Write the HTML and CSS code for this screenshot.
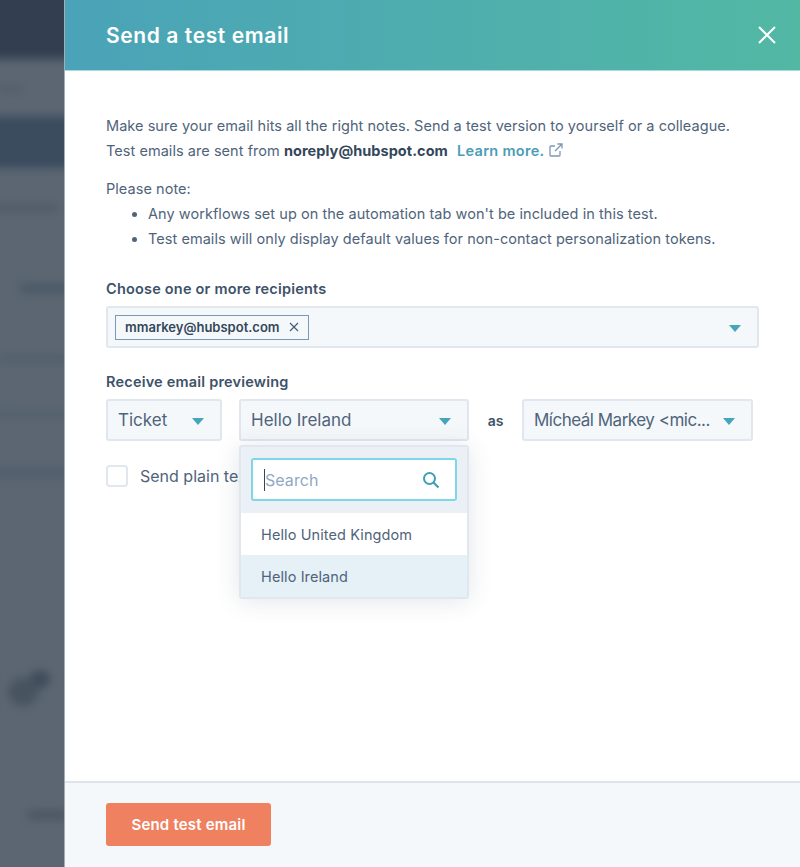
FILE: index.html
```html
<!DOCTYPE html>
<html lang="en">
<head>
<meta charset="utf-8">
<title>Send a test email</title>
<link rel="stylesheet" href="styles.css">
</head>
<body>
<div class="page">
  <div class="backdrop" aria-hidden="true">
    <div class="blur">
      <div class="band b-top"></div>
      <div class="streak s1"></div>
      <div class="band b-dark"></div>
      <div class="streak s2"></div>
      <div class="streak s3"></div>
      <div class="streak s4"></div>
      <div class="streak s5"></div>
      <div class="streak s6"></div>
      <div class="blob"></div>
      <div class="streak s7"></div>
    </div>
  </div>
  <main class="modal">
    <header class="modal-head">
      <h1>Send a test email</h1>
      <svg class="close" viewBox="0 0 18 18" width="18" height="18"><path d="M1 1l16 16M17 1L1 17" stroke="#fff" stroke-width="2" fill="none"/></svg>
    </header>
    <section class="modal-body">
      <p class="intro">Make sure your email hits all the right notes. Send a test version to yourself or a colleague.<br>Test emails are sent from <strong>noreply@hubspot.com</strong> <a class="link">Learn more.
        <svg class="ext" viewBox="0 0 14 14" width="14" height="14"><path d="M11 8v4a1 1 0 0 1-1 1H2a1 1 0 0 1-1-1V4a1 1 0 0 1 1-1h4M8.5 1H13v4.5M13 1L6 8" stroke="#7c98b6" stroke-width="1.3" fill="none"/></svg></a></p>
      <p class="note">Please note:</p>
      <ul class="notes">
        <li>Any workflows set up on the automation tab won't be included in this test.</li>
        <li>Test emails will only display default values for non-contact personalization tokens.</li>
      </ul>
      <label class="label l-rec">Choose one or more recipients</label>
      <div class="field recipients">
        <span class="tag">mmarkey@hubspot.com
          <svg viewBox="0 0 10 10" width="10" height="10"><path d="M1 1l8 8M9 1L1 9" stroke="#425b76" stroke-width="1.2" fill="none"/></svg></span>
        <span class="caret"></span>
      </div>
      <label class="label l-prev">Receive email previewing</label>
      <div class="row">
        <div class="field select s-type"><span>Ticket</span><span class="caret"></span></div>
        <div class="select-wrap">
          <div class="field select s-var"><span>Hello Ireland</span><span class="caret"></span></div>
          <div class="menu">
            <div class="menu-search">
              <div class="search"><span class="cursor"></span><span class="placeholder">Search</span>
                <svg viewBox="0 0 18 18" width="18" height="18"><circle cx="7.5" cy="7.5" r="5.5" stroke="#3f9fb5" stroke-width="2" fill="none"/><path d="M11.5 11.5L16.5 16.5" stroke="#3f9fb5" stroke-width="2.2" fill="none"/></svg>
              </div>
            </div>
            <div class="opt">Hello United Kingdom</div>
            <div class="opt sel">Hello Ireland</div>
          </div>
        </div>
        <span class="as">as</span>
        <div class="field select s-who"><span class="ell">Mícheál Markey &lt;mic...</span><span class="caret"></span></div>
      </div>
      <div class="check"><span class="box"></span><span>Send plain text only</span></div>
    </section>
    <footer class="modal-foot"><button class="send">Send test email</button></footer>
  </main>
</div>
</body>
</html>
```
FILE: styles.css
```css
* { box-sizing: border-box; }
html, body { margin: 0; height: 100%; }
body { font-family: Inter, "Noto Sans", sans-serif; color: #4f647b; background: #fff; }
.page { display: flex; width: 800px; height: 867px; overflow: hidden; }

.backdrop { width: 64px; flex: none; overflow: hidden; background: #5b6572; }
.blur { filter: blur(5px); margin: -10px; height: 887px; background: #5c6673; display: flow-root; }
.band { width: 90px; }
.b-top { height: 69px; background: #333f50; }
.b-dark { height: 52px; background: #3a4c5e; }
.streak { background: #4f5a68; }
.s1 { margin: 27px 0 24px 8px; width: 24px; height: 6px; background: #525c69; }
.s2 { margin: 36px 0 0 0; width: 68px; height: 8px; }
.s3 { margin: 72px 0 0 30px; width: 60px; height: 9px; background: #4b5766; }
.s4 { margin: 62px 0 0 10px; width: 80px; height: 7px; background: #525e6c; }
.s5 { margin: 50px 0 0 0; width: 90px; height: 6px; background: #525e6c; }
.s6 { margin: 50px 0 0 0; width: 90px; height: 10px; background: #515e6c; }
.blob { margin: 200px 0 0 18px; width: 30px; height: 28px; border-radius: 50%; background: #47535f; box-shadow: 17px -13px 0 -5px #3e4a5a; }
.s7 { margin: 105px 0 0 38px; width: 40px; height: 8px; background: #49535f; }

.modal { flex: 1; min-width: 0; display: flex; flex-direction: column; background: #fff; border-left: 1px solid #a4aeb9; }
.modal-head { height: 71px; flex: none; display: flex; align-items: center; justify-content: space-between; padding: 0 24px 0 41px; background: linear-gradient(90deg, #4aa3b8, #52b8a4); border-bottom: 1px solid #a9d8e0; }
.modal-head h1 { margin: 0; color: #fff; font-size: 21px; font-weight: 600; letter-spacing: .6px; }
.close { display: block; }

.modal-body { flex: 1; padding: 42px 41px 0; font-size: 14.5px; letter-spacing: .05px; }
.intro { margin: 0; line-height: 25px; }
.intro strong { color: #33475b; font-weight: 700; margin-right: 5px; }
.link { color: #4a9db5; font-weight: 600; letter-spacing: .3px; }
.ext { vertical-align: -1px; margin-left: 1px; }
.note { margin: 13px 0 0; line-height: 25px; }
.notes { margin: 0; padding: 0 0 0 42px; line-height: 25px; }
.label { display: block; color: #3d5269; font-weight: 600; font-size: 14.5px; line-height: 20px; letter-spacing: .2px; }
.l-rec { margin-top: 28px; }
.l-prev { margin-top: 24px; }

.field { background: #f5f8fa; border: 2px solid #e1e7ef; border-radius: 3px; display: flex; align-items: center; justify-content: space-between; }
.recipients { margin-top: 7px; height: 42px; width: 653px; padding: 0 16px 0 7px; }
.tag { display: flex; align-items: center; gap: 9px; height: 25px; padding: 0 9px; border: 1px solid #7c98b6; background: #f5f8fa; color: #33475b; font-size: 13px; font-weight: 600; letter-spacing: 0; }
.caret { width: 0; height: 0; flex: none; border-left: 6.5px solid transparent; border-right: 6.5px solid transparent; border-top: 7px solid #45a5bb; margin-top: 2px; }

.row { margin-top: 7px; display: flex; align-items: center; }
.select { height: 42px; padding: 0 10px; font-size: 17px; letter-spacing: 0; }
.s-type { width: 116px; padding-right: 16px; }
.select-wrap { position: relative; margin-left: 17px; }
.s-var { width: 230px; padding-right: 16px; }
.as { width: 53px; text-align: center; font-size: 14px; font-weight: 600; color: #3d5269; letter-spacing: 0; }
.s-who { width: 231px; padding-right: 16px; }
.ell { white-space: nowrap; letter-spacing: -.5px; }

.menu { position: absolute; top: 46px; left: 0; width: 230px; background: #fff; border: 2px solid #e1e7ef; border-radius: 3px; box-shadow: 0 2px 24px rgba(51,71,91,.14); z-index: 2; }
.menu-search { height: 66px; background: #eaf0f6; padding: 11px 10px 0; }
.search { height: 43px; background: #fff; border: 2px solid #7fd6e4; border-radius: 3px; display: flex; align-items: center; padding: 0 15px 0 11px; font-size: 16px; }
.cursor { width: 1px; height: 22px; background: #33475b; flex: none; }
.placeholder { flex: 1; color: #8fa9c4; }
.opt { height: 42px; display: flex; align-items: center; padding: 0 20px; font-size: 14.5px; letter-spacing: .1px; }
.opt.sel { background: #e5f1f7; }

.check { margin-top: 24px; display: flex; align-items: center; gap: 12px; font-size: 16px; white-space: nowrap; letter-spacing: 0; }
.box { width: 22px; height: 22px; background: #fff; border: 2px solid #e1e7ef; border-radius: 4px; flex: none; }

.modal-foot { height: 86px; flex: none; background: #f5f8fa; border-top: 2px solid #dfe3eb; padding: 20px 41px 0; }
.send { display: block; width: 165px; height: 43px; border: 0; border-radius: 3px; background: #ef8060; color: #fff; font: 600 15px Inter, sans-serif; letter-spacing: .2px; }
```
